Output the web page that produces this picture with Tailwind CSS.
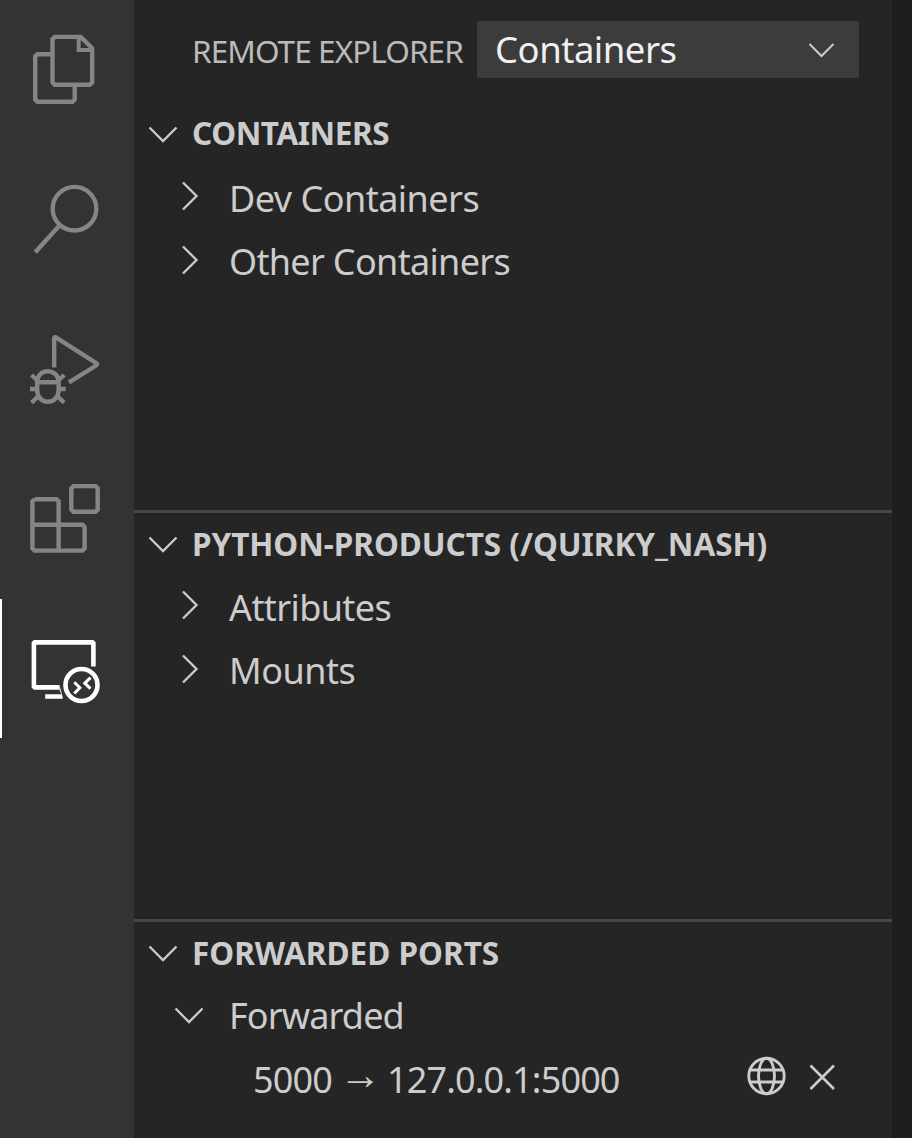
<!DOCTYPE html>
<html lang="en">
<head>
<meta charset="utf-8">
<title>Remote Explorer</title>
<script src="https://cdn.jsdelivr.net/npm/@tailwindcss/browser@4"></script>
</head>
<body class="w-[912px] h-[1138px] overflow-hidden bg-[#1e1e1e] font-['Noto_Sans',sans-serif] text-[#cccccc]">
<div class="flex h-full">
  <nav class="relative flex w-[134px] shrink-0 flex-col bg-[#333333]">
    <svg class="block shrink-0" width="134" height="144" viewBox="0 0 134 144" fill="none" stroke="#858585" stroke-width="4.4">
      <path d="M52.5 54.2H37.500L35.200 56.500V99.500L37.500 101.800H72.400L74.700 99.500V85"/>
      <path d="M54.800 36.900H80.800L92.200 48.300V82.400L89.900 84.700H54.800L52.500 82.400V39.200Z"/>
      <path d="M78.700 37V50H92.500" stroke-width="4"/>
    </svg>
    <svg class="block shrink-0" width="134" height="150" viewBox="0 144 134 150" fill="none" stroke="#858585" stroke-width="4.4">
      <circle cx="74.500" cy="208.700" r="21.800"/>
      <path d="M60 225L35.200 252.300"/>
    </svg>
    <svg class="block shrink-0" width="134" height="150" viewBox="0 294 134 150" fill="none" stroke="#858585" stroke-width="4.400">
      <path d="M54.200 367.500V337.200H55.500L97 363.700V365L69 382.300" stroke-linejoin="bevel"/>
      <path d="M37.200 382.200H58.600V390C58.600 397 54 401.800 47.800 401.800S37.200 397 37.200 390V382C37.200 375.500 42 371.200 47.800 371.200S58.600 375.500 58.600 382"/>
      <path d="M30 389H37M58.500 389H65.700M31.500 375L38 381M64.200 375L57.700 381M31.500 402.700L38.500 396M64.200 402.700L57.200 396" stroke-width="4.4"/>
    </svg>
    <svg class="block shrink-0" width="134" height="150" viewBox="0 444 134 150" fill="none" stroke="#858585" stroke-width="4.4">
      <path d="M73.500 486.100H95.500L97.700 488.300V509.600L95.500 511.800H73.500L71.300 509.600V488.300Z"/>
      <path d="M34.600 499.300H56.400L58.600 501.500V550.600M32.400 524.700H82.400L84.600 526.900V548.400L82.400 550.600H34.600L32.400 548.400V501.500L34.600 499.300"/>
    </svg>
    <svg class="block shrink-0" width="134" height="150" viewBox="0 594 134 150" fill="none" stroke="#ffffff" stroke-width="4.600">
      <path d="M93.400 666.500V643.300L92.400 642.400H34.800L33.900 643.300V686.500L34.800 687.400H59.500" />
      <path d="M59.500 690V685L63 698.800H45.200V694.200H61.300Z" fill="#fff" stroke="none"/>
      <circle cx="81.500" cy="685" r="16"/>
      <path d="M74.300 682.300L79.800 687.700L74.300 693.500M90.500 677.600L84.800 683.200L90.500 688.600" stroke-width="3"/>
    </svg>
    <div class="absolute left-0 top-[599px] h-[139px] w-0.5 bg-white"></div>
  </nav>

  <main class="flex w-[758px] shrink-0 flex-col bg-[#252526]">
    <header class="flex h-[102px] shrink-0 items-start pl-[58px] pt-[21px]">
      <h1 class="w-[285px] whitespace-nowrap text-[31.500px] leading-[60px] tracking-[-0.93px] text-[#bbbbbb]">REMOTE EXPLORER</h1>
      <div class="flex h-[57px] w-[382px] items-center justify-between bg-[#3c3c3c] pl-[18px] pr-6">
        <span class="text-[36.500px] leading-[57px] tracking-[-0.5px] text-[#f0f0f0]">Containers</span>
        <svg width="27" height="18" viewBox="0 0 27 18" fill="none" stroke="#cccccc" stroke-width="2"><path d="M1.500 3L13.500 15L25.500 3"/></svg>
      </div>
    </header>

    <section class="h-[408px] shrink-0">
      <h2 class="flex h-[63px] items-center whitespace-nowrap pl-[14px] text-[31.500px] font-bold tracking-[-0.42px]">
        <svg class="mr-[14px] shrink-0" width="30" height="18" viewBox="0 0 30 18" fill="none" stroke="#cccccc" stroke-width="2.300"><path d="M1.500 2.500L15 16L28.500 2.500"/></svg><span class="pb-0.5">CONTAINERS</span>
      </h2>
      <div class="flex h-[65px] items-center pl-[47px] pt-0.5 text-[36px] tracking-[-0.52px]">
        <svg class="mr-[30px] mb-[5px] shrink-0" width="18" height="30" viewBox="0 0 18 30" fill="none" stroke="#cccccc" stroke-width="2.300"><path d="M2 1.500L15.500 15L2 28.500"/></svg><span>Dev Containers</span>
      </div>
      <div class="flex h-[63px] items-center pl-[47px] text-[36px] tracking-[-0.67px]">
        <svg class="mr-[30px] mb-[3px] shrink-0" width="18" height="30" viewBox="0 0 18 30" fill="none" stroke="#cccccc" stroke-width="2.300"><path d="M2 1.500L15.500 15L2 28.500"/></svg><span>Other Containers</span>
      </div>
    </section>

    <section class="h-[409px] shrink-0 border-t-3 border-[#474747]">
      <h2 class="flex h-[63px] items-center whitespace-nowrap pl-[14px] text-[31.500px] font-bold tracking-[-0.05px]">
        <svg class="mr-[14px] mb-0.5 shrink-0" width="30" height="18" viewBox="0 0 30 18" fill="none" stroke="#cccccc" stroke-width="2.300"><path d="M1.500 2.500L15 16L28.500 2.500"/></svg><span class="pb-0.5">PYTHON-PRODUCTS (/QUIRKY_NASH)</span>
      </h2>
      <div class="flex h-[63px] items-center pl-[47px] text-[36px] tracking-[-0.6px]">
        <svg class="mr-[30px] mb-[5px] shrink-0" width="18" height="30" viewBox="0 0 18 30" fill="none" stroke="#cccccc" stroke-width="2.300"><path d="M2 1.500L15.500 15L2 28.500"/></svg><span>Attributes</span>
      </div>
      <div class="flex h-[63px] items-center pl-[47px] text-[36px] tracking-[-0.5px]">
        <svg class="mr-[30px] mb-[3px] shrink-0" width="18" height="30" viewBox="0 0 18 30" fill="none" stroke="#cccccc" stroke-width="2.300"><path d="M2 1.500L15.500 15L2 28.500"/></svg><span>Mounts</span>
      </div>
    </section>

    <section class="grow border-t-3 border-[#474747]">
      <h2 class="flex h-[62px] items-center whitespace-nowrap pl-[14px] text-[31.500px] font-bold">
        <svg class="mr-[14px] shrink-0" width="30" height="18" viewBox="0 0 30 18" fill="none" stroke="#cccccc" stroke-width="2.300"><path d="M1.500 2.500L15 16L28.500 2.500"/></svg><span>FORWARDED PORTS</span>
      </h2>
      <div class="flex h-[63px] items-center pl-10 text-[36px] tracking-[-0.85px]">
        <svg class="mr-[25px] mb-0.5 shrink-0" width="30" height="18" viewBox="0 0 30 18" fill="none" stroke="#cccccc" stroke-width="2.300"><path d="M1.500 2.500L15 16L28.500 2.500"/></svg><span>Forwarded</span>
      </div>
      <div class="flex h-[64px] items-center pl-[119px] text-[36px] tracking-[-0.85px]">
        <div class="flex w-[494px] items-center whitespace-nowrap"><span class="w-[79px] pt-0.5">5000</span><span class="w-[55px] pb-2 text-center font-['Liberation_Sans'] text-[42px] leading-none">→</span><span class="pt-0.5">127.0.0.1:5000</span></div>
        <svg class="mb-[7px] mr-[22px] shrink-0" width="40" height="40" viewBox="0 0 40 40" fill="none" stroke="#cccccc" stroke-width="2.900"><circle cx="19.500" cy="20" r="17.700"/><ellipse cx="19.500" cy="20" rx="8" ry="17.700"/><path d="M3 14H36M3 26H36"/></svg>
        <svg class="mb-1 shrink-0" width="27" height="27" viewBox="0 0 27 27" fill="none" stroke="#cccccc" stroke-width="2.600"><path d="M1.500 1.500L25 25M25 1.500L1.500 25"/></svg>
      </div>
    </section>
  </main>
</div>
</body>
</html>
